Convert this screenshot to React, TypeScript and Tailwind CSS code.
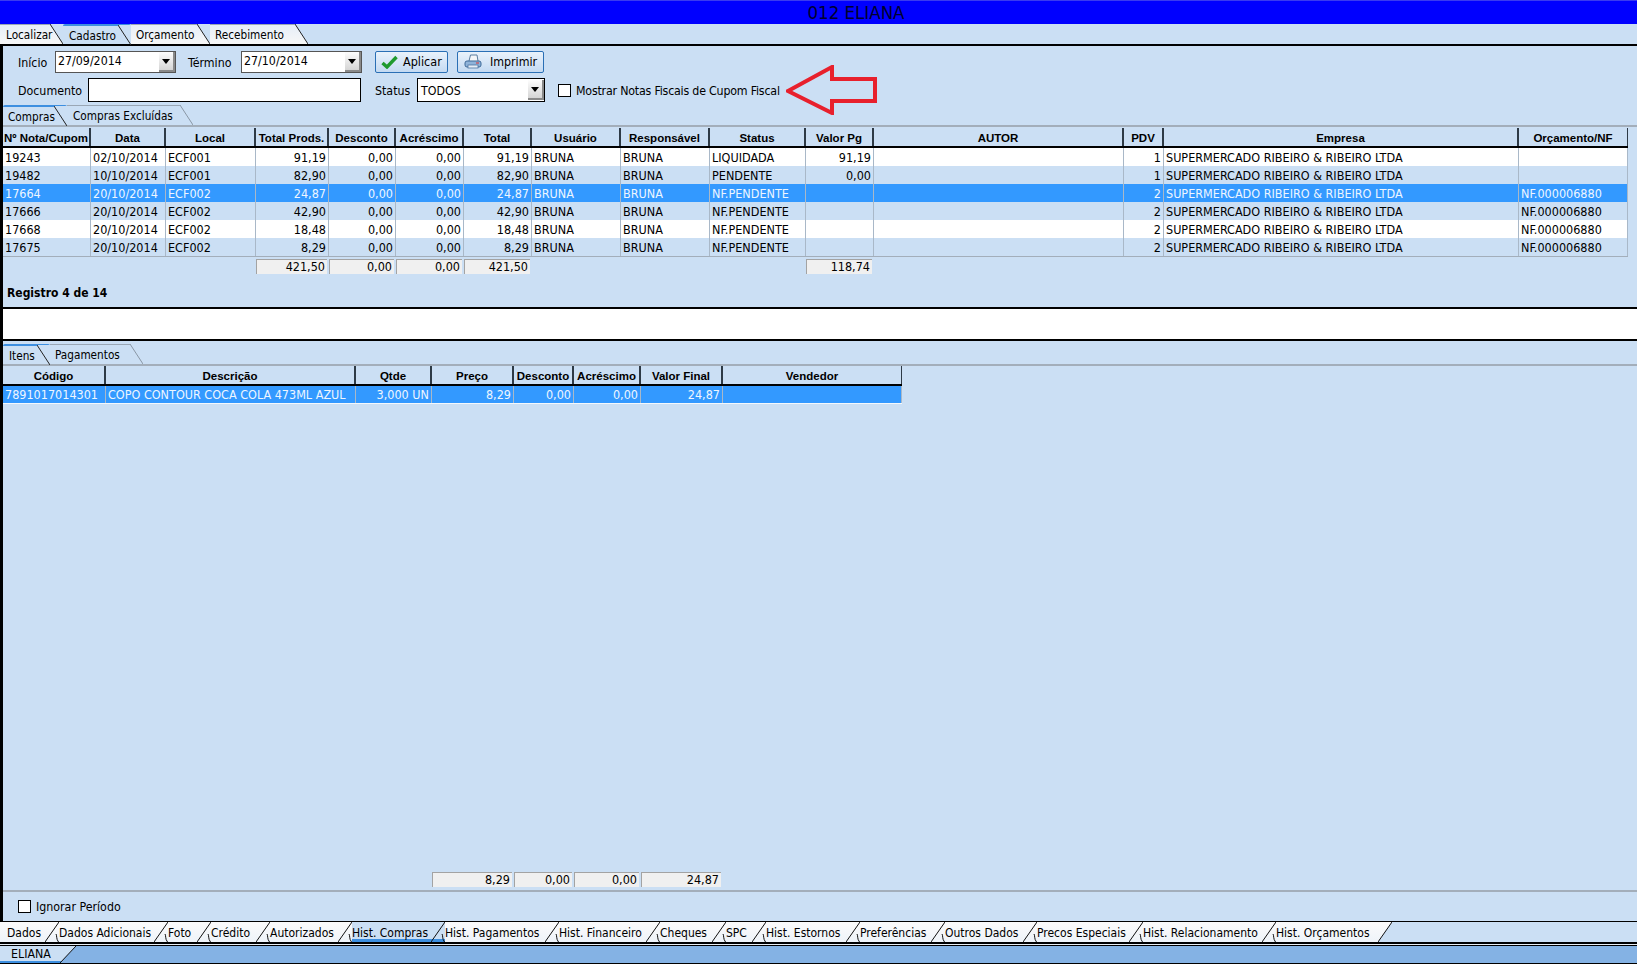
import type { ReactNode } from 'react';

const PANEL = 'bg-[#cbdff4]';
const GRID1 = 'grid grid-cols-[88px_75px_90px_73px_67px_68px_68px_89px_89px_96px_68px_250px_40px_355px_109px] w-[1625px]';
const GRID2 = 'grid grid-cols-[103px_250px_76px_82px_60px_67px_82px_179px] w-[899px]';

const heads1 = ['Nº Nota/Cupom', 'Data', 'Local', 'Total Prods.', 'Desconto', 'Acréscimo', 'Total', 'Usuário', 'Responsável', 'Status', 'Valor Pg', 'AUTOR', 'PDV', 'Empresa', 'Orçamento/NF'];
const heads2 = ['Código', 'Descrição', 'Qtde', 'Preço', 'Desconto', 'Acréscimo', 'Valor Final', 'Vendedor'];

const EMP = 'SUPERMERCADO RIBEIRO & RIBEIRO LTDA';
const rows = [
  ['19243', '02/10/2014', 'ECF001', '91,19', '0,00', '0,00', '91,19', 'BRUNA', 'BRUNA', 'LIQUIDADA', '91,19', '', '1', EMP, ''],
  ['19482', '10/10/2014', 'ECF001', '82,90', '0,00', '0,00', '82,90', 'BRUNA', 'BRUNA', 'PENDENTE', '0,00', '', '1', EMP, ''],
  ['17664', '20/10/2014', 'ECF002', '24,87', '0,00', '0,00', '24,87', 'BRUNA', 'BRUNA', 'NF.PENDENTE', '', '', '2', EMP, 'NF.000006880'],
  ['17666', '20/10/2014', 'ECF002', '42,90', '0,00', '0,00', '42,90', 'BRUNA', 'BRUNA', 'NF.PENDENTE', '', '', '2', EMP, 'NF.000006880'],
  ['17668', '20/10/2014', 'ECF002', '18,48', '0,00', '0,00', '18,48', 'BRUNA', 'BRUNA', 'NF.PENDENTE', '', '', '2', EMP, 'NF.000006880'],
  ['17675', '20/10/2014', 'ECF002', '8,29', '0,00', '0,00', '8,29', 'BRUNA', 'BRUNA', 'NF.PENDENTE', '', '', '2', EMP, 'NF.000006880'],
];
const rowBg = ['bg-white', PANEL, 'bg-[#3399ff] text-[#eef6ff]', PANEL, 'bg-white', PANEL];
const rightCols1 = [3, 4, 5, 6, 10, 12];

const topTabs = [
  { label: 'Localizar', w: 'w-[63px]', pl: 'pl-[6px]', active: false },
  { label: 'Cadastro', w: 'w-[68px]', pl: 'pl-[6px]', active: true },
  { label: 'Orçamento', w: 'w-[79px]', pl: 'pl-[5px]', active: false },
  { label: 'Recebimento', w: 'w-[98px]', pl: 'pl-[5px]', active: false },
];

const bottomTabs = [
  { label: 'Dados', w: 'w-[59px]', pl: 'pl-[7px]' },
  { label: 'Dados Adicionais', w: 'w-[109px]', pl: 'pl-0' },
  { label: 'Foto', w: 'w-[43px]', pl: 'pl-0' },
  { label: 'Crédito', w: 'w-[59px]', pl: 'pl-0' },
  { label: 'Autorizados', w: 'w-[82px]', pl: 'pl-0' },
  { label: 'Hist. Compras', w: 'w-[93px]', pl: 'pl-0', active: true },
  { label: 'Hist. Pagamentos', w: 'w-[114px]', pl: 'pl-0' },
  { label: 'Hist. Financeiro', w: 'w-[101px]', pl: 'pl-0' },
  { label: 'Cheques', w: 'w-[66px]', pl: 'pl-0' },
  { label: 'SPC', w: 'w-[40px]', pl: 'pl-0' },
  { label: 'Hist. Estornos', w: 'w-[94px]', pl: 'pl-0' },
  { label: 'Preferências', w: 'w-[85px]', pl: 'pl-0' },
  { label: 'Outros Dados', w: 'w-[92px]', pl: 'pl-0' },
  { label: 'Precos Especiais', w: 'w-[106px]', pl: 'pl-0' },
  { label: 'Hist. Relacionamento', w: 'w-[133px]', pl: 'pl-0' },
  { label: 'Hist. Orçamentos', w: 'w-[116px]', pl: 'pl-0', last: true },
];

function UpTab({ label, w, pl, active, gray }: { label: string; w: string; pl: string; active?: boolean; gray?: boolean }) {
  const bg = active ? 'bg-[#cbdff4]' : gray ? 'bg-[#cbdff4]' : 'bg-gradient-to-b from-[#e6eef7] to-[#f7f7f7]';
  return (
    <div className={`relative flex-none h-full flex items-center text-[11.7px] ${w} ${pl} ${bg} ${active ? 'border-t-[2px] border-[#3d8fe0] rounded-t-[2px]' : 'border-t border-[#9aa7b5]'}`}>
      <span className="relative z-10 whitespace-nowrap pt-[3px]">{label}</span>
      <svg className="absolute right-0 top-[-1px] h-[20px] w-[13px]" viewBox="0 0 13 20" preserveAspectRatio="none">
        <polygon points="0,0 13,0 13,20" fill="#cbdff4" />
        <line x1="0" y1="0" x2="13" y2="20" stroke={gray ? '#8a97a5' : '#222222'} strokeWidth="1" />
      </svg>
    </div>
  );
}

function DownTab({ label, w, pl, active, last }: { label: string; w: string; pl: string; active?: boolean; last?: boolean }) {
  return (
    <div className={`relative flex-none h-full flex items-center text-[12px] ${w} ${pl} ${active ? 'bg-[#cbdff4] border-b-[3px] border-[#3d8fe0]' : 'bg-gradient-to-b from-[#fbfbfb] to-[#eef3f9]'}`}>
      <span className={`relative z-10 whitespace-nowrap ${active ? 'pt-[5px]' : 'pt-[2px]'}`}>{label}</span>
      <svg className="absolute right-0 top-0 h-[20px] w-[14px]" viewBox="0 0 14 20" preserveAspectRatio="none">
        {last && <polygon points="0,20 14,0 14,20" fill="#cbdff4" />}
        <line x1="0" y1="20" x2="14" y2="0" stroke="#111111" strokeWidth="1" />
        {!last && <path d="M13.5 20 C11 17 12 13 11 12" fill="none" stroke="#111111" strokeWidth="1" />}
      </svg>
    </div>
  );
}

function DropBtn() {
  return (
    <div className="flex-none w-[16px] h-[20px] bg-gradient-to-b from-[#fdfdfd] to-[#d5d5d5] border-r-2 border-b-2 border-[#8a8a8a] flex items-center justify-center">
      <svg width="8" height="5" viewBox="0 0 8 5"><polygon points="0,0 8,0 4,5" fill="#000" /></svg>
    </div>
  );
}

function Combo({ value, w, h, tall }: { value: string; w: string; h: string; tall?: boolean }) {
  return (
    <div className={`flex-none flex items-center justify-between bg-white ${w} ${h} ${tall ? 'border border-black pl-[3px]' : 'border border-[#555555] pl-[2px]'}`}>
      <span className={tall ? 'pt-[3px]' : 'pb-[1px]'}>{value}</span>
      <DropBtn />
    </div>
  );
}

function Btn({ w, children }: { w: string; children: ReactNode }) {
  return (
    <div className={`flex-none h-[22px] flex items-center rounded-[2px] border border-[#2a6fb5] bg-gradient-to-b from-[#e9f2fb] to-[#c4daf2] ${w}`}>
      {children}
    </div>
  );
}

function HeadCell({ label }: { label: string }) {
  return (
    <div className="h-[18px] pt-[3px] flex items-center justify-center whitespace-nowrap overflow-hidden border-r-[2px] border-[#2e3a46] last:border-r font-['Liberation_Sans',sans-serif] text-[11.5px] font-bold">
      {label}
    </div>
  );
}

function Cell({ value, right }: { value: string; right?: boolean }) {
  return (
    <div className={`h-full pt-[2px] flex items-center whitespace-nowrap overflow-hidden border-r border-[#a9b8c8] px-[2px] text-[12.5px] ${right ? 'justify-end' : ''}`}>
      {value}
    </div>
  );
}

function TotalCell({ value, cls }: { value: string; cls?: string }) {
  return (
    <div className={`h-[15px] pt-[1px] flex items-center justify-end pr-[2px] mr-[2px] bg-[#f0f0f0] border-t border-l border-[#a3a3a3] text-[12.5px] ${cls ?? ''}`}>
      {value}
    </div>
  );
}

export default function App() {
  return (
    <div className={`relative w-[1637px] h-[964px] overflow-hidden flex flex-col ${PANEL} text-[12.3px] leading-none text-black font-['DejaVu_Sans_Condensed','DejaVu_Sans',sans-serif]`}>
      {/* titulo */}
      <div className="flex-none h-[24px] pt-[1px] bg-[#0000ff] border-t border-[#3a3af0] flex items-center justify-center pl-[75px] text-[18.5px] text-[#01012e]">
        012 ELIANA
      </div>

      {/* abas principais */}
      <div className="flex-none h-[20px] flex">
        {topTabs.map((t) => (
          <UpTab key={t.label} {...t} />
        ))}
      </div>

      <div className="flex-1 min-h-0 flex flex-col border-t-2 border-l-[3px] border-black">
        {/* filtros */}
        <div className="flex-none h-[22px] mt-[5px] flex items-center">
          <span className="flex-none w-[52px] pl-[15px] pt-[2px]">Início</span>
          <Combo value="27/09/2014" w="w-[121px]" h="h-[22px]" />
          <span className="flex-none w-[65px] pl-[12px] pt-[2px]">Término</span>
          <Combo value="27/10/2014" w="w-[121px]" h="h-[22px]" />
          <div className="w-[13px] flex-none" />
          <Btn w="w-[73px]">
            <svg className="ml-[5px]" width="17" height="14" viewBox="0 0 17 14">
              <path d="M1.5 8 L6 12 L15.5 2" fill="none" stroke="#1f9a2e" strokeWidth="3.4" />
            </svg>
            <span className="ml-[5px] pt-[1px] text-[12.5px]">Aplicar</span>
          </Btn>
          <div className="w-[9px] flex-none" />
          <Btn w="w-[87px]">
            <svg className="ml-[6px]" width="18" height="16" viewBox="0 0 18 16">
              <path d="M5 7 L6.5 1 H13 L14 7" fill="#f4f6f8" stroke="#5b7c9e" strokeWidth="1" />
              <rect x="1" y="7" width="16" height="6" rx="2" fill="#8fb3d9" stroke="#3f6a99" strokeWidth="1" />
              <rect x="4" y="11" width="10" height="3" fill="#e6edf5" stroke="#4d76a3" strokeWidth="0.8" />
              <rect x="12" y="8.5" width="3" height="1" fill="#d33" />
            </svg>
            <span className="ml-[8px] pt-[1px]">Imprimir</span>
          </Btn>
        </div>

        <div className="flex-none h-[24px] mt-[5px] flex items-center">
          <span className="flex-none w-[85px] pl-[15px] pt-[2px]">Documento</span>
          <div className="flex-none w-[273px] h-[24px] bg-white border border-black" />
          <span className="flex-none w-[56px] pl-[14px] pt-[2px]">Status</span>
          <Combo value="TODOS" w="w-[128px]" h="h-[24px]" tall />
          <div className="flex-none ml-[13px] w-[13px] h-[13px] bg-white border border-black" />
          <span className="ml-[5px] pt-[2px] tracking-[-0.2px]">Mostrar Notas Fiscais de Cupom Fiscal</span>
        </div>

        {/* abas compras */}
        <div className="flex-none h-[20px] mt-[3px] flex">
          <UpTab label="Compras" w="w-[64px]" pl="pl-[5px]" active />
          <UpTab label="Compras Excluídas" w="w-[126px]" pl="pl-[6px]" gray />
        </div>
        <div className="flex-none h-[2px] bg-[#a3aeba]" />

        {/* grade compras */}
        <div className={`flex-none mt-[1px] ${GRID1} border-b-2 border-black`}>
          {heads1.map((h) => (
            <HeadCell key={h} label={h} />
          ))}
        </div>
        <div className="flex-none w-[1625px] border-b border-r border-[#a3aeba]">
          {rows.map((r, i) => (
            <div key={i} className={`h-[18px] ${GRID1} ${rowBg[i]}`}>
              {r.map((v, j) => (
                <Cell key={j} value={v} right={rightCols1.includes(j)} />
              ))}
            </div>
          ))}
        </div>
        <div className={`flex-none mt-[2px] ${GRID1}`}>
          <TotalCell value="421,50" cls="col-start-4" />
          <TotalCell value="0,00" />
          <TotalCell value="0,00" />
          <TotalCell value="421,50" />
          <TotalCell value="118,74" cls="col-start-11" />
        </div>
        <div className="flex-none h-[33px] flex items-center pl-[4px] pt-[5px] font-bold text-[12px]">Registro 4 de 14</div>
        <div className="flex-none h-[34px] bg-white border-y-2 border-black" />

        {/* abas itens */}
        <div className="flex-none h-[20px] mt-[3px] flex">
          <UpTab label="Itens" w="w-[47px]" pl="pl-[6px]" active />
          <UpTab label="Pagamentos" w="w-[93px]" pl="pl-[5px]" gray />
        </div>
        <div className="flex-none h-[2px] bg-[#a3aeba]" />

        {/* grade itens */}
        <div className={`flex-none ${GRID2} border-b-2 border-black`}>
          {heads2.map((h) => (
            <HeadCell key={h} label={h} />
          ))}
        </div>
        <div className={`flex-none h-[18px] ${GRID2} bg-[#3399ff] text-[#eef6ff] border-b border-[#f4f8fc]`}>
          <Cell value="7891017014301" />
          <Cell value="COPO CONTOUR COCA COLA 473ML AZUL" />
          <Cell value="3,000 UN" right />
          <Cell value="8,29" right />
          <Cell value="0,00" right />
          <Cell value="0,00" right />
          <Cell value="24,87" right />
          <Cell value="" />
        </div>

        <div className="flex-1" />

        <div className={`flex-none ${GRID2}`}>
          <TotalCell value="8,29" cls="col-start-4" />
          <TotalCell value="0,00" />
          <TotalCell value="0,00" />
          <TotalCell value="24,87" />
        </div>
        <div className="flex-none h-[2px] mt-[3px] bg-[#a3aeba]" />
        <div className="flex-none h-[29px] flex items-center pl-[15px]">
          <div className="w-[13px] h-[13px] bg-white border border-black" />
          <span className="ml-[5px] pt-[2px]">Ignorar Período</span>
        </div>

        {/* abas inferiores */}
        <div className="flex-none h-[21px] flex border-t border-black -ml-[3px]">
          {bottomTabs.map((t) => (
            <DownTab key={t.label} {...t} />
          ))}
        </div>
      </div>

      <div className="flex-none h-[2px] bg-black" />
      <div className="flex-none h-[1px] bg-[#e8eef5]" />
      <div className="flex-none h-[1px] bg-black" />
      <div className="flex-none h-[17px] bg-[#84b2e4] flex">
        <div className="relative w-[76px] h-full flex items-center pl-[11px] pt-[2px] bg-[#cbdff4] border-b-[2px] border-[#3d8fe0]">
          ELIANA
          <svg className="absolute right-0 top-0 h-[17px] w-[16px]" viewBox="0 0 16 17" preserveAspectRatio="none">
            <polygon points="0,17 16,0 16,17" fill="#84b2e4" />
            <line x1="0" y1="17" x2="16" y2="0" stroke="#111111" strokeWidth="1" />
          </svg>
        </div>
      </div>
      <div className="flex-none h-[1px] bg-black" />

      {/* seta vermelha */}
      <svg className="absolute left-[786px] top-[65px]" width="92" height="50" viewBox="786 65 92 50">
        <polygon points="788,91 832,67 832,79 875,79 875,101 832,101 832,113" fill="none" stroke="#e8202c" strokeWidth="4" strokeLinejoin="miter" />
      </svg>
    </div>
  );
}
